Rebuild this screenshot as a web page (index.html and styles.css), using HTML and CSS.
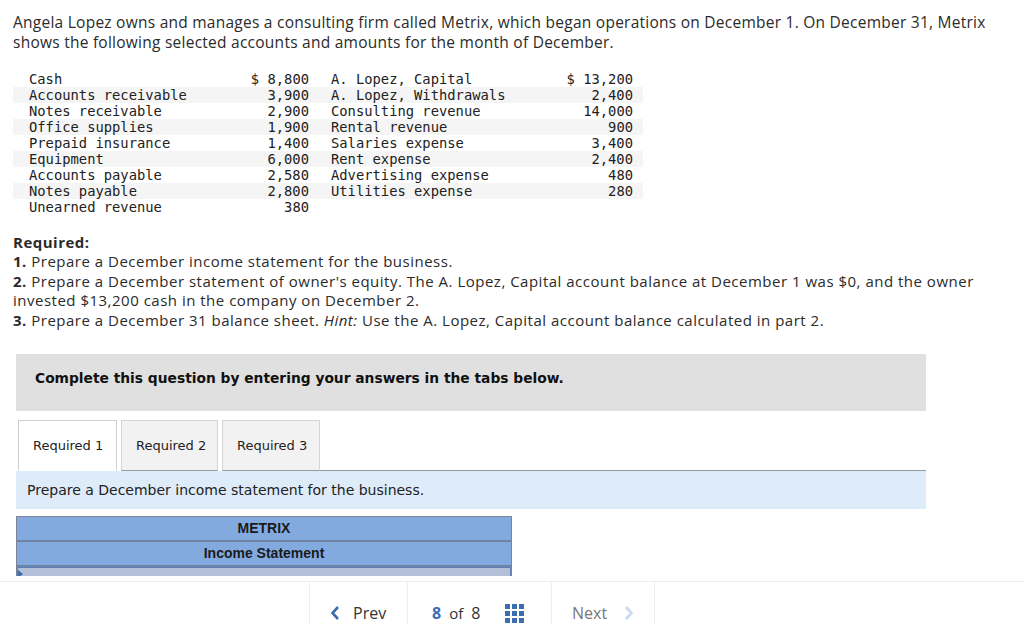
FILE: index.html
```html
<!DOCTYPE html>
<html>
<head>
<meta charset="utf-8">
<link rel="stylesheet" href="styles.css">
</head>
<body>
<div class="content">
  <p class="intro">Angela Lopez owns and manages a consulting firm called Metrix, which began operations on December 1. On December 31, Metrix shows the following selected accounts and amounts for the month of December.</p>
  <table class="accounts">
    <colgroup><col class="c1"><col class="c2"><col class="c3"><col class="c4"></colgroup>
    <tr><td>Cash</td><td class="amt">$ 8,800</td><td class="lbl2">A. Lopez, Capital</td><td class="amt2">$ 13,200</td></tr>
    <tr class="alt"><td>Accounts receivable</td><td class="amt">3,900</td><td class="lbl2">A. Lopez, Withdrawals</td><td class="amt2">2,400</td></tr>
    <tr><td>Notes receivable</td><td class="amt">2,900</td><td class="lbl2">Consulting revenue</td><td class="amt2">14,000</td></tr>
    <tr class="alt"><td>Office supplies</td><td class="amt">1,900</td><td class="lbl2">Rental revenue</td><td class="amt2">900</td></tr>
    <tr><td>Prepaid insurance</td><td class="amt">1,400</td><td class="lbl2">Salaries expense</td><td class="amt2">3,400</td></tr>
    <tr class="alt"><td>Equipment</td><td class="amt">6,000</td><td class="lbl2">Rent expense</td><td class="amt2">2,400</td></tr>
    <tr><td>Accounts payable</td><td class="amt">2,580</td><td class="lbl2">Advertising expense</td><td class="amt2">480</td></tr>
    <tr class="alt"><td>Notes payable</td><td class="amt">2,800</td><td class="lbl2">Utilities expense</td><td class="amt2">280</td></tr>
    <tr class="last"><td>Unearned revenue</td><td class="amt">380</td><td class="lbl2"></td><td class="amt2"></td></tr>
  </table>
  <div class="required">
    <div><b>Required:</b></div>
    <div><b>1.</b> Prepare a December income statement for the business.</div>
    <div><b>2.</b> Prepare a December statement of owner's equity. The A. Lopez, Capital account balance at December 1 was $0, and the owner invested $13,200 cash in the company on December 2.</div>
    <div><b>3.</b> Prepare a December 31 balance sheet. <i>Hint:</i> Use the A. Lopez, Capital account balance calculated in part 2.</div>
  </div>
  <div class="notice">Complete this question by entering your answers in the tabs below.</div>
  <div class="tabs">
    <div class="tab active">Required 1</div>
    <div class="tab">Required 2</div>
    <div class="tab">Required 3</div>
    <div class="tab-rest"></div>
  </div>
  <div class="instruction">Prepare a December income statement for the business.</div>
  <div class="statement">
    <div class="st-row">METRIX</div>
    <div class="st-row">Income Statement</div>
    <div class="st-row st-input"><span class="marker"></span></div>
  </div>
</div>
<div class="footer">
  <div class="nav">
    <div class="seg prev"><svg class="chev" width="10" height="16" viewBox="0 0 10 16"><path d="M8 2 L2.5 8 L8 14" fill="none" stroke="#3b6db3" stroke-width="2.6"/></svg><span>Prev</span></div>
    <div class="seg pages"><span class="cur">8</span><span class="of">of</span><span>8</span>
      <svg class="grid" width="19" height="19" viewBox="0 0 19 19">
        <g fill="#3b6db3">
          <rect x="0" y="0" width="5" height="5"/><rect x="7" y="0" width="5" height="5"/><rect x="14" y="0" width="5" height="5"/>
          <rect x="0" y="7" width="5" height="5"/><rect x="7" y="7" width="5" height="5"/><rect x="14" y="7" width="5" height="5"/>
          <rect x="0" y="14" width="5" height="5"/><rect x="7" y="14" width="5" height="5"/><rect x="14" y="14" width="5" height="5"/>
        </g>
      </svg>
    </div>
    <div class="seg next"><span>Next</span><svg class="chev" width="10" height="16" viewBox="0 0 10 16"><path d="M2 2 L7.5 8 L2 14" fill="none" stroke="#c9daef" stroke-width="2.6"/></svg></div>
  </div>
</div>
</body>
</html>
```
FILE: styles.css
```css
html, body {
  margin: 0;
  padding: 0;
  background: #fff;
}
body {
  font-family: "Open Sans", "Liberation Sans", sans-serif;
  color: #2b2b2b;
  width: 1024px;
  height: 624px;
  overflow: hidden;
}
.content {
  height: 576px;
  overflow: hidden;
}
.intro {
  margin: 0;
  padding: 12px 13px 0 13px;
  font-size: 15.5px;
  letter-spacing: 0.25px;
  line-height: 20px;
}
.accounts {
  margin: 19px 0 0 13px;
  border-collapse: collapse;
  table-layout: fixed;
  width: 630px;
  font-family: "DejaVu Sans Mono", monospace;
  font-size: 13.8px;
  color: #222;
}
.accounts td {
  padding: 0;
  height: 16px;
  line-height: 16px;
  white-space: nowrap;
}
.accounts col.c1 { width: 207px; }
.accounts col.c2 { width: 89px; }
.accounts col.c3 { width: 224px; }
.accounts col.c4 { width: 110px; }
.accounts td:first-child { padding-left: 16px; }
.accounts .amt { text-align: right; }
.accounts .lbl2 { padding-left: 22px; }
.accounts .amt2 { text-align: right; padding-right: 10px; }
.accounts tr.alt td { background: #f5f5f5; }
.required {
  margin: 17.5px 13px 0 13px;
  font-size: 15px;
  letter-spacing: 0.5px;
  line-height: 19.5px;
}
.required b { font-weight: 700; }
.notice {
  margin: 24px 0 0 16px;
  width: 910px;
  height: 57px;
  box-sizing: border-box;
  padding: 15px 0 0 19px;
  background: #e0e0e0;
  font-family: "DejaVu Sans", Verdana, sans-serif;
  font-weight: bold;
  font-size: 13.8px;
  line-height: 18px;
  color: #111;
}
.tabs {
  display: flex;
  margin: 9px 0 0 18px;
  width: 908px;
  height: 51px;
  align-items: stretch;
}
.tab {
  box-sizing: border-box;
  height: 51px;
  padding: 0 0 0 14px;
  margin-right: 4px;
  border: 1px solid #d5d5d5;
  border-bottom: 1px solid #999;
  background: #f2f2f2;
  font-family: "DejaVu Sans", Verdana, sans-serif;
  font-size: 13px;
  line-height: 49px;
  color: #222;
}
.tab:nth-child(1) { width: 99px; }
.tab:nth-child(2) { width: 97px; }
.tab:nth-child(3) { width: 98px; margin-right: 0; }
.tab.active {
  background: #fff;
  border-color: #cfcfcf;
  border-bottom-color: #fff;
}
.tab-rest {
  flex: 1;
  border-bottom: 1px solid #999;
}
.instruction {
  margin-left: 16px;
  width: 910px;
  height: 38px;
  box-sizing: border-box;
  padding: 10px 0 0 11px;
  background: #deebf8;
  font-family: "DejaVu Sans", Verdana, sans-serif;
  font-size: 14px;
  line-height: 18px;
  color: #222;
}
.statement {
  margin: 7px 0 0 16px;
  width: 494px;
  border: 1px solid #7a8494;
  border-bottom: none;
}
.st-row {
  height: 23px;
  line-height: 23px;
  text-align: center;
  background: #82aadf;
  border-bottom: 2px solid #6d84a6;
  font-family: "Liberation Sans", Arial, sans-serif;
  font-weight: bold;
  font-size: 14px;
  color: #1a1a1a;
}
.st-row.st-input {
  height: 12px;
  border-bottom: none;
  background: #b4bfd8;
  border-left: 1px solid #5b7fb6;
  border-right: 1px solid #5b7fb6;
  border-top: 1px solid #5b7fb6;
  position: relative;
  box-sizing: border-box;
}
.marker {
  position: absolute;
  left: 0;
  top: 2px;
  width: 0;
  height: 0;
  border-top: 4px solid transparent;
  border-bottom: 4px solid transparent;
  border-left: 5px solid #3b6db3;
}
.footer {
  margin-top: 5px;
  border-top: 1px solid #ececec;
  height: 60px;
}
.nav {
  display: flex;
  margin-left: 309px;
  height: 60px;
}
.seg {
  display: flex;
  align-items: flex-start;
  box-sizing: border-box;
  padding-top: 20px;
  border-left: 1px solid #efefef;
  font-family: "Open Sans", "Liberation Sans", sans-serif;
  font-size: 16px;
  line-height: 22px;
  color: #333;
}
.seg.prev { width: 98px; padding-left: 20px; }
.seg.prev .chev { margin: 3px 13px 0 0; }
.seg.pages { width: 144px; padding-left: 24px; }
.seg.pages .cur { color: #3b6db3; font-weight: 700; }
.seg.pages .of { margin: 0 8px 0 8px; font-size: 15px; }
.seg.pages .grid { margin: 2px 0 0 25px; }
.seg.next { width: 104px; padding-left: 20px; border-right: 1px solid #efefef; color: #777; }
.seg.next .chev { margin: 3px 0 0 17px; }
```
